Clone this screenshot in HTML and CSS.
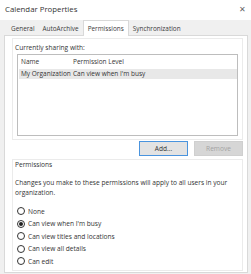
FILE: index.html
```html
<!DOCTYPE html>
<html lang="en">
<head>
  <meta charset="UTF-8">
  <title>Calendar Properties</title>
  <link rel="stylesheet" href="styles.css">
</head>
<body>
  <!-- タイトルバー -->
  <div class="titlebar">
    <span class="title">Calendar Properties</span>
    <span class="close">&#x2715;</span>
  </div>

  <!-- タブ -->
  <div class="tabs">
    <div class="tab">General</div>
    <div class="tab">AutoArchive</div>
    <div class="tab active">Permissions</div>
    <div class="tab">Synchronization</div>
  </div>

  <div class="panel">
    <div class="group sharing">
      <div class="group-label">Currently sharing with:</div>
      <div class="list">
        <div class="list-row list-head">
          <span>Name</span>
          <span>Permission Level</span>
        </div>
        <div class="list-row selected">
          <span>My Organization</span>
          <span>Can view when I'm busy</span>
        </div>
      </div>
    </div>

    <div class="buttons">
      <button type="button" class="btn focus">Add...</button>
      <button type="button" class="btn disabled">Remove</button>
    </div>

    <div class="group perms">
      <div class="group-label">Permissions</div>
      <p class="desc">Changes you make to these permissions will apply to all users in your organization.</p>
      <div class="radios">
        <label class="radio"><span class="dot"></span>None</label>
        <label class="radio checked"><span class="dot"></span>Can view when I'm busy</label>
        <label class="radio"><span class="dot"></span>Can view titles and locations</label>
        <label class="radio"><span class="dot"></span>Can view all details</label>
        <label class="radio"><span class="dot"></span>Can edit</label>
      </div>
    </div>
  </div>
</body>
</html>
```

FILE: styles.css
```css
/* ベース */
body {
  margin: 0;
  width: 251px;
  height: 274px;
  overflow: hidden;
  background-color: #f0f0f0;
  font-family: "Open Sans", "Noto Sans", sans-serif;
  color: #333;
}

/* タイトルバー */
.titlebar {
  height: 20px;
  background-color: #fff;
  display: flex;
  align-items: center;
  justify-content: space-between;
  padding: 0 5px 3px 5px;
  box-sizing: border-box;
}
.title {
  font-size: 7.8px;
  color: #333;
}
.close {
  font-size: 7.5px;
  color: #666;
}

/* タブ */
.tabs {
  display: flex;
  align-items: flex-end;
  height: 15px;
  padding-left: 7px;
}
.tab {
  font-size: 6.4px;
  line-height: 13px;
  padding: 0 4px;
  color: #3a3a3a;
}
.tab.active {
  background-color: #fff;
  border: 1px solid #d9d9d9;
  border-bottom: none;
  line-height: 15px;
  margin-bottom: -1px;
  position: relative;
  z-index: 1;
}

/* パネル */
.panel {
  margin: 0 3px 0 4px;
  height: 238px;
  box-sizing: border-box;
  background-color: #fff;
  border: 1px solid #d9d9d9;
  padding: 2px 4px 0 7px;
}

.group {
  border: 1px solid #ebebeb;
  padding: 0 0 0 2px;
}
.group-label {
  font-size: 6.6px;
  line-height: 12px;
  margin-top: 3px;
}

/* リスト */
.list {
  height: 82px;
  box-sizing: border-box;
  border: 1px solid #bdbdbd;
  margin: 0 4px 3px 2px;
  padding-top: 2px;
}
.list-row {
  display: grid;
  grid-template-columns: 52px 1fr;
  font-size: 6.5px;
  line-height: 10px;
  padding-left: 2px;
  margin: 0 0 0 1px;
}
.list-row.selected {
  background-color: #e8e8e8;
  margin-top: 2px;
}

/* ボタン */
.buttons {
  display: flex;
  justify-content: flex-end;
  gap: 6px;
  margin-top: 1px;
}
.btn {
  width: 49px;
  height: 15px;
  padding: 0;
  font-family: inherit;
  font-size: 6.6px;
  border-radius: 0;
}
.btn.focus {
  background-color: #e3e3e3;
  border: 1px solid #4a94de;
  color: #333;
}
.btn.disabled {
  background-color: #d6d6d6;
  border: 1px solid #cfcfcf;
  color: #a3a3a3;
}

/* 権限グループ */
.perms {
  margin-top: 3px;
  height: 112px;
  box-sizing: border-box;
}
.perms .group-label {
  line-height: 9px;
  margin-top: 0;
}
.desc {
  margin: 9px 0 0;
  font-size: 6.6px;
  line-height: 9.5px;
  padding-right: 8px;
}

.radios {
  margin-top: 8px;
  padding-left: 2px;
}
.radio {
  display: flex;
  align-items: center;
  height: 12.5px;
  font-size: 6.6px;
}
.dot {
  width: 8px;
  height: 8px;
  box-sizing: border-box;
  border: 1px solid #333;
  border-radius: 50%;
  margin-right: 3px;
  display: flex;
  align-items: center;
  justify-content: center;
}
.radio.checked .dot::after {
  content: "";
  width: 4px;
  height: 4px;
  border-radius: 50%;
  background-color: #222;
}
```
